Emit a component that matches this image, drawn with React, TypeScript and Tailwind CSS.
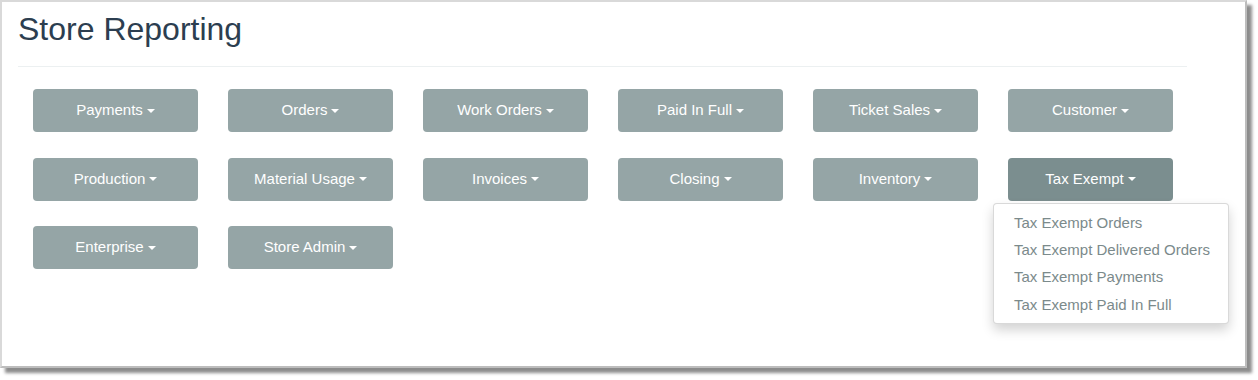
const rows: string[][] = [
  ["Payments", "Orders", "Work Orders", "Paid In Full", "Ticket Sales", "Customer"],
  ["Production", "Material Usage", "Invoices", "Closing", "Inventory", "Tax Exempt"],
  ["Enterprise", "Store Admin"],
];

const taxItems = [
  "Tax Exempt Orders",
  "Tax Exempt Delivered Orders",
  "Tax Exempt Payments",
  "Tax Exempt Paid In Full",
];

function Caret() {
  return (
    <span className="ml-[4px] inline-block h-0 w-0 border-x-[4px] border-t-[4px] border-x-transparent border-t-white align-middle" />
  );
}

function ReportButton({ label }: { label: string }) {
  const open = label === "Tax Exempt";
  return (
    <div className="relative">
      <button
        className={`flex h-[43px] w-full items-center justify-center rounded-[4px] text-[15px] text-white ${
          open ? "bg-[#7b8e8f]" : "bg-[#95a5a6]"
        }`}
      >
        <span>{label}</span>
        <Caret />
      </button>
      {open && (
        <ul className="absolute left-[-15px] top-full z-10 mt-[2px] w-[236px] rounded-[4px] border border-black/15 bg-white py-[5px] shadow-[0_6px_12px_rgba(0,0,0,0.175)]">
          {taxItems.map((item) => (
            <li key={item} className="px-[20px] py-[3px] text-[15px] leading-[21.4px] whitespace-nowrap text-[#7b8a8b]">
              {item}
            </li>
          ))}
        </ul>
      )}
    </div>
  );
}

export default function App() {
  return (
    <div className="h-[380px] w-[1258px] bg-white font-['Liberation_Sans',Arial,sans-serif]">
      <div className="h-[368px] w-[1247px] border-2 border-[#d9d9d9] border-r-[#bdbdbd] border-b-[#bdbdbd] bg-white shadow-[5px_5px_3px_rgba(0,0,0,0.45)]">
        <div className="pl-[16px] pr-[58px] pt-[10px]">
          <h1 className="text-[32px] leading-[35px] text-[#2c3e50]">Store Reporting</h1>
          <hr className="mt-[19px] border-t border-[#ecf0f1]" />
          <div className="ml-[15px] mt-[22px] grid w-[1140px] grid-cols-6 gap-x-[30px] gap-y-[25.5px]">
            {rows.flat().map((label) => (
              <ReportButton key={label} label={label} />
            ))}
          </div>
        </div>
      </div>
    </div>
  );
}
